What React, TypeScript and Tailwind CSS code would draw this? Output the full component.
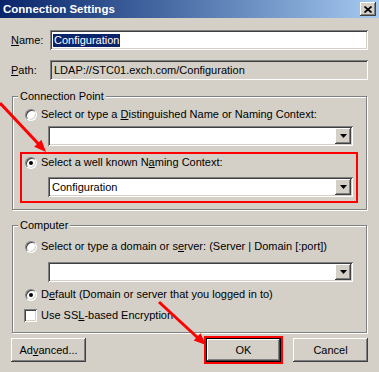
import React from "react";

const raised =
  "shadow-[inset_-1px_-1px_0_#404040,inset_1px_1px_0_#ffffff,inset_-2px_-2px_0_#808080,inset_2px_2px_0_#d4d0c8]";
const sunken =
  "shadow-[inset_1px_1px_0_#808080,inset_-1px_-1px_0_#ffffff,inset_2px_2px_0_#404040,inset_-2px_-2px_0_#d4d0c8]";

function Radio({ checked }: { checked?: boolean }) {
  return (
    <div className="w-[12px] h-[12px] rounded-full bg-white border border-t-[#808080] border-l-[#808080] border-r-white border-b-white flex items-center justify-center shadow-[inset_1px_1px_0_#404040,inset_-1px_-1px_0_#d4d0c8]">
      {checked && <div className="w-[4px] h-[4px] rounded-full bg-black" />}
    </div>
  );
}

function RadioRow({ checked, children }: { checked?: boolean; children: React.ReactNode }) {
  return (
    <div className="flex items-center gap-[4px] h-[13px]">
      <Radio checked={checked} />
      <span>{children}</span>
    </div>
  );
}

function Combo({ value, className }: { value?: string; className: string }) {
  return (
    <div className={`h-[20px] bg-white p-[2px] flex ${sunken} ${className}`}>
      <div className="flex-1 flex items-center pl-[2px]">{value}</div>
      <div className={`w-[16px] h-full bg-[#d4d0c8] flex items-center justify-center ${raised}`}>
        <svg width="7" height="4" viewBox="0 0 7 4">
          <path d="M0 0h7L3.5 4z" fill="#000" />
        </svg>
      </div>
    </div>
  );
}

function Group({ label, className, children }: { label: string; className: string; children: React.ReactNode }) {
  return (
    <div
      className={`relative mx-[12px] border border-[#808080] shadow-[inset_1px_1px_0_#ffffff,1px_1px_0_#ffffff] flex flex-col ${className}`}
    >
      <span className="absolute left-[5px] top-[-7px] px-[2px] bg-[#d4d0c8] leading-[13px]">{label}</span>
      {children}
    </div>
  );
}

function Button({ children, isDefault }: { children: React.ReactNode; isDefault?: boolean }) {
  if (isDefault) {
    return (
      <div className="w-[75px] h-[24px] border border-black bg-[#d4d0c8]">
        <div className={`w-full h-full flex items-center justify-center ${raised}`}>{children}</div>
      </div>
    );
  }
  return (
    <div className={`w-[75px] h-[24px] bg-[#d4d0c8] flex items-center justify-center ${raised}`}>{children}</div>
  );
}

export default function App() {
  return (
    <div className="relative w-[379px] h-[372px] overflow-hidden bg-[#d4d0c8] text-black text-[11px] leading-[13px] font-['Liberation_Sans',Arial,sans-serif]">
      {/* title bar */}
      <div className="h-[18px] flex items-center justify-between pl-[3px] pr-[3px] bg-gradient-to-r from-[#0a246a] to-[#a6caf0]">
        <span className="text-white font-bold text-[11.5px]">Connection Settings</span>
        <div className={`w-[16px] h-[14px] bg-[#d4d0c8] flex items-center justify-center ${raised}`}>
          <svg width="8" height="7" viewBox="0 0 8 7">
            <path d="M0.5 0.5L7.5 6.5M7.5 0.5L0.5 6.5" stroke="#000" strokeWidth="1.7" />
          </svg>
        </div>
      </div>

      {/* name / path */}
      <div className="mt-[12px] flex items-center pl-[11px] pr-[11px]">
        <span className="w-[39px]">
          <u>N</u>ame:
        </span>
        <div className={`flex-1 h-[20px] bg-white p-[2px] flex items-center ${sunken}`}>
          <span className="ml-[1px] px-[1px] bg-[#0a246a] text-white">Configuration</span>
        </div>
      </div>
      <div className="mt-[10px] flex items-center pl-[11px] pr-[11px]">
        <span className="w-[39px]">
          <u>P</u>ath:
        </span>
        <div className={`flex-1 h-[20px] bg-[#d4d0c8] p-[2px] flex items-center pl-[4px] ${sunken}`}>
          LDAP://STC01.exch.com/Configuration
        </div>
      </div>

      {/* connection point */}
      <Group label="Connection Point" className="mt-[16px] pl-[12px] pb-[6px]">
        <div className="mt-[11px]">
          <RadioRow>
            Select or type a <u>D</u>istinguished Name or Naming Context:
          </RadioRow>
        </div>
        <Combo className="mt-[5px] ml-[23px] mr-[13px]" />
        <div className="mt-[6px] -ml-[5px] mr-[8px] border-2 border-[#ff0000] pl-[3px] pb-[4px] flex flex-col">
          <div className="mt-[2px]">
            <RadioRow checked>
              Select a well known N<u>a</u>ming Context:
            </RadioRow>
          </div>
          <Combo value="Configuration" className="mt-[8px] ml-[23px] mr-[3px]" />
        </div>
      </Group>

      {/* computer */}
      <Group label="Computer" className="mt-[15px] pl-[12px] pb-[10px]">
        <div className="mt-[14px]">
          <RadioRow>
            Select or type a domain or s<u>e</u>rver: (Server | Domain [:port])
          </RadioRow>
        </div>
        <Combo className="mt-[9px] ml-[23px] mr-[13px]" />
        <div className="mt-[6px]">
          <RadioRow checked>
            D<u>e</u>fault (Domain or server that you logged in to)
          </RadioRow>
        </div>
        <div className="mt-[8px] -ml-[1px] flex items-center gap-[4px] h-[13px]">
          <div className={`w-[13px] h-[13px] bg-white ${sunken}`} />
          <span>
            Use SS<u>L</u>-based Encryption
          </span>
        </div>
      </Group>

      {/* buttons */}
      <div className="mt-[3px] h-[28px] flex items-center justify-between pl-[11px] pr-[11px]">
        <Button>
          Ad<u>v</u>anced...
        </Button>
        <div className="flex items-center gap-[10px]">
          <div className="border-2 border-[#ff0000]">
            <Button isDefault>OK</Button>
          </div>
          <Button>Cancel</Button>
        </div>
      </div>

      {/* annotation arrows */}
      <svg className="absolute inset-0 pointer-events-none" width="379" height="372" viewBox="0 0 379 372">
        <line x1="0" y1="103" x2="39" y2="144.5" stroke="#ff0000" strokeWidth="3" />
        <path d="M46 152L34.2 146.7L41.4 139.8Z" fill="#ff0000" />
        <line x1="159" y1="302" x2="198" y2="338" stroke="#ff0000" strokeWidth="3" />
        <path d="M206 345L193.7 340.6L200.5 333.2Z" fill="#ff0000" />
      </svg>
    </div>
  );
}
